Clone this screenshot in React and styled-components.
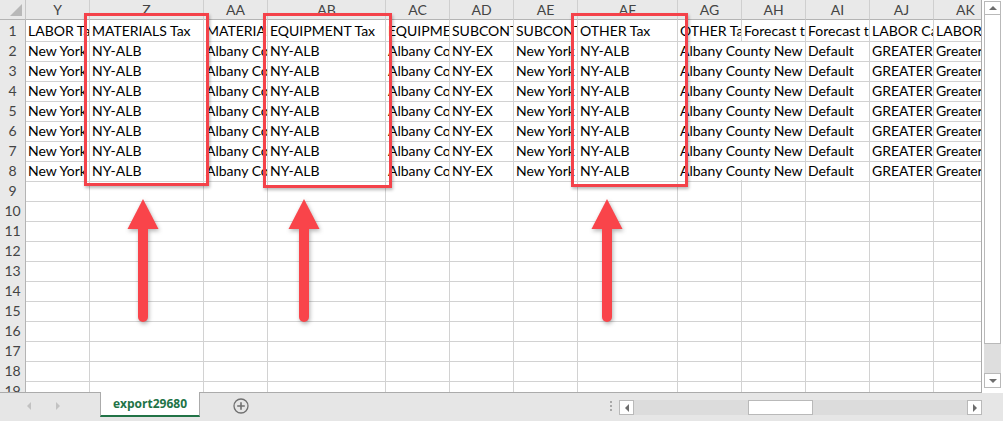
import React from "react";
import styled, { createGlobalStyle } from "styled-components";

const GlobalStyle = createGlobalStyle`
  html, body {
    margin: 0;
    padding: 0;
    background: #fff;
  }
  body {
    font-family: Lato, "Liberation Sans", sans-serif;
  }
`;

const columns = [
  { id: "Y", w: 64 },
  { id: "Z", w: 114 },
  { id: "AA", w: 64 },
  { id: "AB", w: 118 },
  { id: "AC", w: 64 },
  { id: "AD", w: 64 },
  { id: "AE", w: 64 },
  { id: "AF", w: 100 },
  { id: "AG", w: 64 },
  { id: "AH", w: 64 },
  { id: "AI", w: 64 },
  { id: "AJ", w: 64 },
  { id: "AK", w: 64 },
];

const template = "26px " + columns.map((c) => c.w + "px").join(" ");

const titles = [
  "LABOR Tax Code",
  "MATERIALS Tax",
  "MATERIALS Tax Description",
  "EQUIPMENT Tax",
  "EQUIPMENT Tax Description",
  "SUBCONTRACTOR Tax",
  "SUBCONTRACTOR Tax Description",
  "OTHER Tax",
  "OTHER Tax Description",
  "Forecast type",
  "Forecast template",
  "LABOR Calendar",
  "LABOR Calendar Description",
];

// AG spills into the empty AH cell, so it gets two columns
const dataRow = [
  { text: "New York State" },
  { text: "NY-ALB" },
  { text: "Albany County New York" },
  { text: "NY-ALB" },
  { text: "Albany County New York" },
  { text: "NY-EX" },
  { text: "New York Exempt" },
  { text: "NY-ALB" },
  { text: "Albany County New York", span: 2 },
  { text: "Default" },
  { text: "GREATER" },
  { text: "Greater New York" },
];

const boxes = [
  { left: 84, width: 125, height: 173 },
  { left: 263, width: 129, height: 175 },
  { left: 571, width: 117, height: 174 },
];

const arrows = [143, 304, 607];

const Window = styled.div`
  position: relative;
  width: 1003px;
  height: 421px;
  display: flex;
  flex-direction: column;
  overflow: hidden;
  background: #fff;
`;

const Main = styled.div`
  display: flex;
  height: 393px;
`;

const Sheet = styled.div`
  width: 982px;
  overflow: hidden;
  border-right: 1px solid #ababab;
  border-bottom: 1px solid #ababab;
  box-sizing: border-box;
`;

const Row = styled.div`
  display: grid;
  grid-template-columns: ${template};
  height: 20px;
`;

const Corner = styled.div`
  position: relative;
  background: #e9e9e9;
  border-right: 1px solid #c6c6c6;
  border-bottom: 1px solid #b4b4b4;
  box-sizing: border-box;

  &::after {
    content: "";
    position: absolute;
    right: 3px;
    bottom: 3px;
    border-style: solid;
    border-width: 0 0 12px 12px;
    border-color: transparent transparent #b8b8b8 transparent;
  }
`;

const ColHead = styled.div`
  background: #e9e9e9;
  border-right: 1px solid #cfcfcf;
  border-bottom: 1px solid #b4b4b4;
  box-sizing: border-box;
  color: #444;
  font-size: 14px;
  line-height: 19px;
  text-align: center;
  overflow: hidden;
`;

const RowNum = styled.div`
  background: #e9e9e9;
  border-right: 1px solid #b4b4b4;
  border-bottom: 1px solid #cfcfcf;
  box-sizing: border-box;
  color: #444;
  font-size: 14px;
  line-height: 21px;
  text-align: center;
`;

const Cell = styled.div`
  grid-column: span ${(p) => p.$span || 1};
  border-right: 1px solid #d2d2d2;
  border-bottom: 1px solid #d2d2d2;
  box-sizing: border-box;
  padding: 0 0 0 2px;
  color: #000;
  font-size: 14px;
  line-height: 21px;
  white-space: nowrap;
  overflow: hidden;
`;

const VScroll = styled.div`
  width: 21px;
  display: flex;
  flex-direction: column;
  padding: 1px 2px 5px 2px;
  box-sizing: border-box;
`;

const ScrollBtn = styled.div`
  display: flex;
  align-items: center;
  justify-content: center;
  width: ${(p) => p.$w || "17px"};
  height: ${(p) => p.$h || "14px"};
  background: #fff;
  border: 1px solid #b9b9b9;
  box-sizing: border-box;
  flex-shrink: 0;
`;

const VThumb = styled.div`
  height: 329px;
  background: #fff;
  border: 1px solid #b9b9b9;
  border-top: none;
  box-sizing: border-box;
`;

const VTrack = styled.div`
  flex: 1;
  background: #dedede;
`;

const Tri = styled.span`
  width: 0;
  height: 0;
  border-style: solid;
  border-color: transparent;
  ${(p) =>
    p.$dir === "up" &&
    `border-width: 0 4px 4px 4px; border-bottom-color: ${p.$c || "#6d6d6d"};`}
  ${(p) =>
    p.$dir === "down" &&
    `border-width: 4px 4px 0 4px; border-top-color: ${p.$c || "#6d6d6d"};`}
  ${(p) =>
    p.$dir === "left" &&
    `border-width: 4px 4px 4px 0; border-right-color: ${p.$c || "#6d6d6d"};`}
  ${(p) =>
    p.$dir === "right" &&
    `border-width: 4px 0 4px 4px; border-left-color: ${p.$c || "#6d6d6d"};`}
`;

const BottomBar = styled.div`
  flex: 1;
  display: flex;
  align-items: flex-start;
  background: #e6e6e6;
`;

const SheetNav = styled.div`
  width: 100px;
  height: 26px;
  display: flex;
  align-items: center;
  padding-left: 27px;
  gap: 25px;
  box-sizing: border-box;
`;

const Tab = styled.div`
  width: 100px;
  height: 25px;
  margin-top: -1px;
  background: #fff;
  border-left: 1px solid #ababab;
  border-right: 1px solid #ababab;
  border-bottom: 2px solid #217346;
  box-sizing: border-box;
  color: #217346;
  font-family: "Open Sans", "Noto Sans", sans-serif;
  font-weight: 700;
  font-size: 12px;
  line-height: 24px;
  text-align: center;
`;

const AddBtn = styled.div`
  width: 82px;
  height: 26px;
  display: flex;
  align-items: center;
  justify-content: center;
`;

const Splitter = styled.div`
  margin-left: auto;
  width: 16px;
  height: 26px;
  display: flex;
  flex-direction: column;
  align-items: center;
  justify-content: center;
  gap: 2px;

  span {
    width: 2px;
    height: 2px;
    background: #a8a8a8;
  }
`;

const HScroll = styled.div`
  width: 363px;
  height: 15px;
  margin-top: 7px;
  margin-right: 21px;
  display: flex;
  background: #dcdcdc;
`;

const HThumb = styled.div`
  width: 65px;
  height: 15px;
  margin-left: 114px;
  background: #fff;
  border: 1px solid #b9b9b9;
  box-sizing: border-box;
`;

const Spacer = styled.div`
  flex: 1;
`;

const Box = styled.div`
  position: absolute;
  top: 13px;
  border: 3px solid #f4424a;
  box-sizing: border-box;
  box-shadow: 1px 2px 3px rgba(0, 0, 0, 0.28);
  pointer-events: none;
`;

const ArrowWrap = styled.svg`
  position: absolute;
  top: 197px;
  overflow: visible;
  filter: drop-shadow(1px 2px 2px rgba(0, 0, 0, 0.3));
`;

function Arrow({ x }) {
  return (
    <ArrowWrap
      style={{ left: x - 17 }}
      width="34"
      height="128"
      viewBox="0 0 34 128"
    >
      <polygon points="17,2 1.5,32 32.5,32" fill="#f9444a" />
      <path
        d="M12 30 H22 V120 A5 5 0 0 1 12 120 Z"
        fill="#f9444a"
      />
    </ArrowWrap>
  );
}

function PlusIcon() {
  return (
    <svg width="16" height="16" viewBox="0 0 16 16">
      <circle cx="8" cy="8" r="7" fill="none" stroke="#707070" strokeWidth="1.3" />
      <path d="M8 4.2 V11.8 M4.2 8 H11.8" stroke="#707070" strokeWidth="1.6" />
    </svg>
  );
}

export default function App() {
  const rows = [];
  for (let r = 1; r <= 19; r++) {
    let cells;
    if (r === 1) {
      cells = titles.map((t, i) => <Cell key={i}>{t}</Cell>);
    } else if (r <= 8) {
      cells = dataRow.map((c, i) => (
        <Cell key={i} $span={c.span}>
          {c.text}
        </Cell>
      ));
    } else {
      cells = columns.map((c) => <Cell key={c.id} />);
    }
    rows.push(
      <Row key={r}>
        <RowNum>{r}</RowNum>
        {cells}
      </Row>
    );
  }

  return (
    <>
      <GlobalStyle />
      <Window>
        <Main>
          <Sheet>
            <Row>
              <Corner />
              {columns.map((c) => (
                <ColHead key={c.id}>{c.id}</ColHead>
              ))}
            </Row>
            {rows}
          </Sheet>
          <VScroll>
            <ScrollBtn>
              <Tri $dir="up" />
            </ScrollBtn>
            <VThumb />
            <VTrack />
            <ScrollBtn $h="15px">
              <Tri $dir="down" />
            </ScrollBtn>
          </VScroll>
        </Main>
        <BottomBar>
          <SheetNav>
            <Tri $dir="left" $c="#c2c2c2" />
            <Tri $dir="right" $c="#c2c2c2" />
          </SheetNav>
          <Tab>export29680</Tab>
          <AddBtn>
            <PlusIcon />
          </AddBtn>
          <Spacer />
          <Splitter>
            <span />
            <span />
            <span />
          </Splitter>
          <HScroll>
            <ScrollBtn $w="15px" $h="15px">
              <Tri $dir="left" />
            </ScrollBtn>
            <HThumb />
            <Spacer />
            <ScrollBtn $w="15px" $h="15px">
              <Tri $dir="right" />
            </ScrollBtn>
          </HScroll>
        </BottomBar>
        {boxes.map((b) => (
          <Box key={b.left} style={{ left: b.left, width: b.width, height: b.height }} />
        ))}
        {arrows.map((x) => (
          <Arrow key={x} x={x} />
        ))}
      </Window>
    </>
  );
}
